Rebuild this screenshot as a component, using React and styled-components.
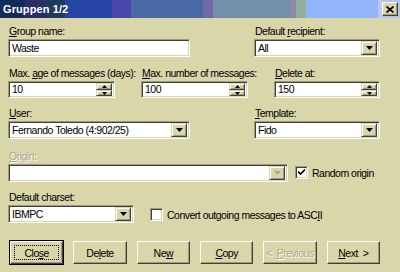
import React from 'react'
import styled, { createGlobalStyle } from 'styled-components'

const FACE = '#d9d6aa'
const SHADOW = '#9e9b7c'
const DARK = '#404040'

const GlobalStyle = createGlobalStyle`
  html, body {
    margin: 0;
    padding: 0;
    background: ${FACE};
  }
  body {
    font-family: "Liberation Sans", Arial, sans-serif;
    font-size: 10.5px;
    letter-spacing: -0.5px;
    color: #000;
  }
`

const Window = styled.div`
  width: 400px;
  height: 272px;
  overflow: hidden;
  background: ${FACE};
`

const TitleBar = styled.div`
  height: 18px;
  display: flex;
  align-items: center;
  justify-content: space-between;
  padding: 0 2px 0 3px;
  background: linear-gradient(to right,
    #132a5c 0 25px, #2b2b66 25px 45px, #1d3a5c 45px 65px,
    #2544a6 65px 112px, #4a46aa 112px 131px, #4868a6 131px 203px,
    #7268a8 203px 213px, #7290a8 213px 290px, #9088a8 290px 296px,
    #90b0a0 296px 306px, #92b4f8 306px 378px, #c4c4f8 378px 382px,
    #b4c4f0 382px 400px);
`

const Title = styled.span`
  color: #fff;
  font-weight: bold;
  font-size: 11px;
  letter-spacing: 0.1px;
`

const CloseBox = styled.div`
  width: 16px;
  height: 14px;
  box-sizing: border-box;
  background: ${FACE};
  border-top: 1px solid #fff;
  border-left: 1px solid #fff;
  border-right: 1px solid ${DARK};
  border-bottom: 1px solid ${DARK};
  box-shadow: inset -1px -1px ${SHADOW};
  display: flex;
  align-items: center;
  justify-content: center;
`

const Body = styled.div`
  padding: 7px 20px 0 8px;
  display: flex;
  flex-direction: column;
`

const Row = styled.div`
  display: flex;
  align-items: flex-end;
  justify-content: ${p => p.$justify || 'flex-start'};
  gap: ${p => p.$gap || 0}px;
  margin-top: ${p => p.$mt || 0}px;
`

const Field = styled.div`
  display: flex;
  flex-direction: column;
  width: ${p => p.$w}px;
`

const Label = styled.label`
  height: 13px;
  line-height: 13px;
  margin: 0 0 ${p => p.$gap ?? 1}px 1px;
  white-space: nowrap;
  color: ${p => (p.$disabled ? '#a9a68a' : '#000')};
  text-shadow: ${p => (p.$disabled ? '1px 1px 0 #fff' : 'none')};
`

const Sunken = styled.div`
  height: ${p => p.$h || 18}px;
  box-sizing: border-box;
  background: #fff;
  border-top: 1px solid ${SHADOW};
  border-left: 1px solid ${SHADOW};
  border-right: 1px solid #fff;
  border-bottom: 1px solid #fff;
  box-shadow: inset 1px 1px ${DARK}, inset -1px -1px ${FACE};
  display: flex;
  align-items: center;
  padding: 2px 2px 2px 3px;
`

const Value = styled.span`
  flex: 1;
  line-height: 13px;
  white-space: nowrap;
  overflow: hidden;
`

const ArrowBtn = styled.div`
  width: 16px;
  height: ${p => p.$h || 14}px;
  box-sizing: border-box;
  background: ${FACE};
  border-top: 1px solid ${FACE};
  border-left: 1px solid ${FACE};
  border-right: 1px solid ${DARK};
  border-bottom: 1px solid ${DARK};
  box-shadow: inset 1px 1px #fff, inset -1px -1px ${SHADOW};
  display: flex;
  align-items: center;
  justify-content: center;
`

const SpinCol = styled.div`
  display: flex;
  flex-direction: column;
`

const Check = styled.div`
  width: 13px;
  height: 13px;
  box-sizing: border-box;
  background: #fff;
  border-top: 1px solid ${SHADOW};
  border-left: 1px solid ${SHADOW};
  border-right: 1px solid #fff;
  border-bottom: 1px solid #fff;
  box-shadow: inset 1px 1px ${DARK}, inset -1px -1px ${FACE};
  display: flex;
  align-items: center;
  justify-content: center;
  flex: none;
`

const CheckRow = styled.div`
  display: flex;
  align-items: center;
  gap: 4px;
  margin: 0 0 ${p => p.$mb || 0}px ${p => p.$ml || 0}px;
  white-space: nowrap;
`

const Buttons = styled.div`
  display: flex;
  gap: 10px;
  margin: 18px 0 0 2px;
`

const Button = styled.div`
  width: 54px;
  height: 23px;
  box-sizing: border-box;
  position: relative;
  background: ${FACE};
  border-top: 1px solid #fff;
  border-left: 1px solid #fff;
  border-right: 1px solid ${DARK};
  border-bottom: 1px solid ${DARK};
  box-shadow: inset -1px -1px ${SHADOW};
  display: flex;
  align-items: center;
  justify-content: center;
  white-space: pre;
  color: ${p => (p.$disabled ? '#a9a68a' : '#000')};
  text-shadow: ${p => (p.$disabled ? '1px 1px 0 #fff' : 'none')};
  ${p => p.$default && `
    outline: 1px solid #000;
    &::after {
      content: '';
      position: absolute;
      inset: 3px;
      border: 1px dotted #000;
    }
  `}
`

const U = styled.span`
  text-decoration: underline;
  text-underline-offset: 1px;
`

const Down = ({ color = '#000' }) => (
  <svg width="7" height="4" viewBox="0 0 7 4">
    <path d="M0 0h7L3.5 4z" fill={color} />
  </svg>
)

const Up = () => (
  <svg width="5" height="3" viewBox="0 0 5 3">
    <path d="M0 3h5L2.5 0z" fill="#000" />
  </svg>
)

const SmallDown = () => (
  <svg width="5" height="3" viewBox="0 0 5 3">
    <path d="M0 0h5L2.5 3z" fill="#000" />
  </svg>
)

const Combo = ({ value, disabled }) => (
  <Sunken>
    <Value>{value}</Value>
    <ArrowBtn>
      <Down color={disabled ? '#a9a68a' : '#000'} />
    </ArrowBtn>
  </Sunken>
)

const Spin = ({ value }) => (
  <Sunken $h={17}>
    <Value>{value}</Value>
    <SpinCol>
      <ArrowBtn $h={7}><Up /></ArrowBtn>
      <ArrowBtn $h={6}><SmallDown /></ArrowBtn>
    </SpinCol>
  </Sunken>
)

const Tick = () => (
  <svg width="7" height="7" viewBox="0 0 7 7">
    <path d="M0 2.5l2.5 2.5L7 0.5" stroke="#000" strokeWidth="1.6" fill="none" />
  </svg>
)

const App = () => {
  return (
    <Window>
      <GlobalStyle />
      <TitleBar>
        <Title>Gruppen 1/2</Title>
        <CloseBox>
          <svg width="8" height="7" viewBox="0 0 8 7">
            <path d="M0.5 0.5l7 6M7.5 0.5l-7 6" stroke="#000" strokeWidth="1.7" />
          </svg>
        </CloseBox>
      </TitleBar>
      <Body>
        <Row $justify="space-between">
          <Field $w={182}>
            <Label><U>G</U>roup name:</Label>
            <Sunken><Value>Waste</Value></Sunken>
          </Field>
          <Field $w={126}>
            <Label>Default <U>r</U>ecipient:</Label>
            <Combo value="All" />
          </Field>
        </Row>
        <Row $justify="space-between" $mt={10}>
          <Field $w={107}>
            <Label>Max. <U>a</U>ge of messages (days):</Label>
            <Spin value="10" />
          </Field>
          <Field $w={107}>
            <Label><U>M</U>ax. number of messages:</Label>
            <Spin value="100" />
          </Field>
          <Field $w={106}>
            <Label><U>D</U>elete at:</Label>
            <Spin value="150" />
          </Field>
        </Row>
        <Row $justify="space-between" $mt={9}>
          <Field $w={182}>
            <Label><U>U</U>ser:</Label>
            <Combo value="Fernando Toledo (4:902/25)" />
          </Field>
          <Field $w={126}>
            <Label><U>T</U>emplate:</Label>
            <Combo value="Fido" />
          </Field>
        </Row>
        <Row $mt={11} $gap={7}>
          <Field $w={280}>
            <Label $disabled $gap={1}><U>O</U>rigin:</Label>
            <Combo value="" disabled />
          </Field>
          <CheckRow $mb={3}>
            <Check><Tick /></Check>
            <span>Random origin</span>
          </CheckRow>
        </Row>
        <Row $mt={9} $gap={16}>
          <Field $w={126}>
            <Label>Default charset:</Label>
            <Combo value="IBMPC" />
          </Field>
          <CheckRow $mb={2}>
            <Check />
            <span>Convert outgoing messages to ASC<U>I</U>I</span>
          </CheckRow>
        </Row>
        <Buttons>
          <Button $default>Clo<U>s</U>e</Button>
          <Button>De<U>l</U>ete</Button>
          <Button>Ne<U>w</U></Button>
          <Button><U>C</U>opy</Button>
          <Button $disabled>{'<  '}<U>P</U>revious</Button>
          <Button><U>N</U>ext{'  >'}</Button>
        </Buttons>
      </Body>
    </Window>
  )
}

export default App
